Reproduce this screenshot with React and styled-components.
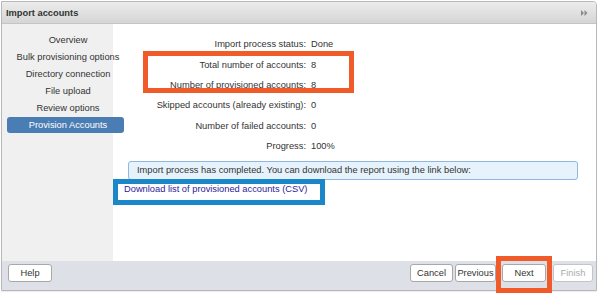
import React from "react";
import styled, { createGlobalStyle } from "styled-components";

const GlobalStyle = createGlobalStyle`
  html, body {
    margin: 0;
    padding: 0;
    background: #fff;
    font-family: "Liberation Sans", Arial, sans-serif;
    font-size: 9.3px;
    color: #333;
  }
`;

const Page = styled.div`
  position: relative;
  width: 600px;
  height: 293px;
  overflow: hidden;
`;

const Window = styled.div`
  position: absolute;
  left: 1px;
  top: 1px;
  width: 594px;
  height: 288px;
  border: 1px solid #b8b8b8;
  border-radius: 0 4px 0 0;
  display: flex;
  flex-direction: column;
  overflow: hidden;
  box-shadow: 0 1px 1px rgba(0, 0, 0, 0.08);
`;

const Header = styled.div`
  height: 21px;
  flex: none;
  display: flex;
  align-items: center;
  justify-content: space-between;
  padding: 0 8px 0 4px;
  background: linear-gradient(to bottom, #ececec, #d5d5d5);
  border-bottom: 1px solid #c4c4c4;
`;

const Title = styled.span`
  font-weight: bold;
  color: #333;
`;

const Body = styled.div`
  flex: 1;
  display: flex;
  min-height: 0;
`;

const Sidebar = styled.div`
  position: relative;
  z-index: 1;
  width: 111px;
  flex: none;
  background: #f0f0f0;
  padding-top: 7.5px;
`;

const NavList = styled.ul`
  list-style: none;
  margin: 0 0 0 5px;
  padding: 0;
  width: 117px;
`;

const NavItem = styled.li`
  height: 16px;
  line-height: 16px;
  margin-bottom: 1px;
  padding-left: 5px;
  text-align: center;
  white-space: nowrap;
  border-radius: 3px;
  color: ${({ $active }) => ($active ? "#fff" : "#333")};
  background: ${({ $active }) => ($active ? "#4a7db3" : "transparent")};
`;

const Content = styled.div`
  flex: 1;
  background: #fff;
  padding-top: 10px;
`;

const StatsTable = styled.div`
  display: grid;
  grid-template-columns: 193px 1fr;
  grid-auto-rows: 20.4px;
  align-items: center;
`;

const Label = styled.div`
  text-align: right;
  white-space: nowrap;
`;

const Value = styled.div`
  padding-left: 5px;
`;

const InfoBox = styled.div`
  margin: 5px 18px 0 15px;
  height: 17px;
  line-height: 17px;
  padding-left: 8px;
  background: #e6f3fc;
  border: 1px solid #8fb8dc;
  border-radius: 3px;
`;

const DownloadLink = styled.a`
  display: inline-block;
  margin-left: 11px;
  line-height: 18px;
  color: #2b1b9c;
  text-decoration: none;
`;

const Footer = styled.div`
  height: 29px;
  flex: none;
  display: flex;
  align-items: flex-start;
  justify-content: space-between;
  padding: 3px 3px 0 6px;
  background: #dde1e7;
  box-sizing: border-box;
`;

const ButtonGroup = styled.div`
  display: flex;
`;

const Button = styled.button`
  height: 18px;
  width: ${({ $w }) => $w}px;
  margin-left: ${({ $ml = 0 }) => $ml}px;
  padding: 0;
  font-family: inherit;
  font-size: 9.3px;
  background: #fff;
  color: ${({ disabled }) => (disabled ? "#aaa" : "#333")};
  border: 1px solid ${({ disabled }) => (disabled ? "#c4c4c4" : "#a8a8a8")};
  border-radius: 3px;
  white-space: nowrap;
`;

const Callout = styled.div`
  position: absolute;
  left: ${({ $x }) => $x}px;
  top: ${({ $y }) => $y}px;
  width: ${({ $w }) => $w}px;
  height: ${({ $h }) => $h}px;
  border: 5px solid ${({ $color }) => $color};
  box-sizing: border-box;
  pointer-events: none;
`;

const ExpandIcon = () => (
  <svg width="7" height="6" viewBox="0 0 7 6">
    <path d="M0 0 L3 3 L0 6 Z M3.5 0 L6.5 3 L3.5 6 Z" fill="#8a8a8a" />
  </svg>
);

const steps = [
  "Overview",
  "Bulk provisioning options",
  "Directory connection",
  "File upload",
  "Review options",
  "Provision Accounts",
];

const stats = [
  ["Import process status:", "Done"],
  ["Total number of accounts:", "8"],
  ["Number of provisioned accounts:", "8"],
  ["Skipped accounts (already existing):", "0"],
  ["Number of failed accounts:", "0"],
  ["Progress:", "100%"],
];

export default function App() {
  return (
    <Page>
      <GlobalStyle />
      <Window>
        <Header>
          <Title>Import accounts</Title>
          <ExpandIcon />
        </Header>
        <Body>
          <Sidebar>
            <NavList>
              {steps.map((s, i) => (
                <NavItem key={s} $active={i === steps.length - 1}>
                  {s}
                </NavItem>
              ))}
            </NavList>
          </Sidebar>
          <Content>
            <StatsTable>
              {stats.map(([label, value]) => (
                <React.Fragment key={label}>
                  <Label>{label}</Label>
                  <Value>{value}</Value>
                </React.Fragment>
              ))}
            </StatsTable>
            <InfoBox>
              Import process has completed. You can download the report using
              the link below:
            </InfoBox>
            <DownloadLink href="#">
              Download list of provisioned accounts (CSV)
            </DownloadLink>
          </Content>
        </Body>
        <Footer>
          <Button $w={44}>Help</Button>
          <ButtonGroup>
            <Button $w={43}>Cancel</Button>
            <Button $w={41} $ml={2}>Previous</Button>
            <Button $w={44} $ml={6}>Next</Button>
            <Button $w={40} $ml={7} disabled>
              Finish
            </Button>
          </ButtonGroup>
        </Footer>
      </Window>
      <Callout $x={143} $y={51} $w={211} $h={42} $color="#f15a29" />
      <Callout $x={113} $y={179} $w={212} $h={26} $color="#1b87c9" />
      <Callout $x={496} $y={256} $w={56} $h={37} $color="#f15a29" />
    </Page>
  );
}
